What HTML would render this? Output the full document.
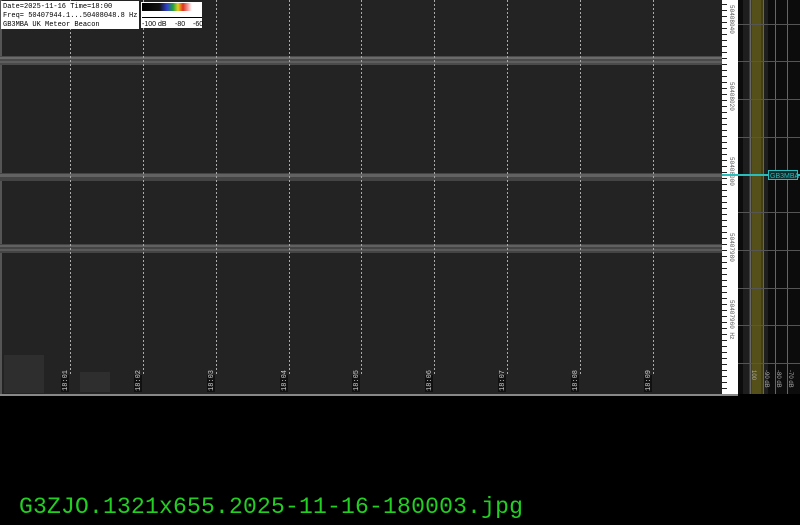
<!DOCTYPE html>
<html><head><meta charset="utf-8"><style>
html,body{margin:0;padding:0;background:#000;width:800px;height:525px;overflow:hidden}
.fn{position:absolute;left:19px;top:494px;font-family:"Liberation Mono",monospace;font-size:23px;color:#22d022;letter-spacing:0.2px;white-space:pre}
</style></head><body>
<svg width="800" height="525" style="position:absolute;left:0;top:0" xmlns="http://www.w3.org/2000/svg">
<rect x="0" y="0" width="800" height="525" fill="#000"/>
<rect x="0" y="0" width="722" height="394" fill="#232323"/>
<rect x="0" y="0" width="2" height="394" fill="#555"/>
<rect x="0" y="394" width="738" height="2" fill="#888"/>
<g>
<rect x="0" y="56" width="722" height="9" fill="#4a4a4a"/>
<rect x="0" y="57" width="722" height="2" fill="#6a6a6a"/>
<rect x="0" y="61" width="722" height="2" fill="#5e5e5e"/>
<rect x="0" y="173" width="722" height="8" fill="#444"/>
<rect x="0" y="174" width="722" height="3" fill="#626262"/>
<rect x="0" y="244" width="722" height="9" fill="#444"/>
<rect x="0" y="245" width="722" height="2" fill="#606060"/>
<rect x="0" y="249" width="722" height="2" fill="#5a5a5a"/>
</g>
<g fill="#2e2e2e">
<rect x="4" y="355" width="40" height="38"/><rect x="80" y="372" width="30" height="20"/>
</g>
<g stroke="#aaa" stroke-width="1" stroke-dasharray="2,2">
<line x1="70.5" y1="0" x2="70.5" y2="375"/>
<line x1="143.5" y1="0" x2="143.5" y2="375"/>
<line x1="216.5" y1="0" x2="216.5" y2="375"/>
<line x1="289.5" y1="0" x2="289.5" y2="375"/>
<line x1="361.5" y1="0" x2="361.5" y2="375"/>
<line x1="434.5" y1="0" x2="434.5" y2="375"/>
<line x1="507.5" y1="0" x2="507.5" y2="375"/>
<line x1="580.5" y1="0" x2="580.5" y2="375"/>
<line x1="653.5" y1="0" x2="653.5" y2="375"/>
</g>
<g font-family="Liberation Mono,monospace" font-size="7" fill="#ccc">
<g transform="translate(67,392) rotate(-90)"><rect x="0" y="-6" width="17" height="8" fill="#111"/><text x="1" y="0">18:01</text></g>
<g transform="translate(140,392) rotate(-90)"><rect x="0" y="-6" width="17" height="8" fill="#111"/><text x="1" y="0">18:02</text></g>
<g transform="translate(213,392) rotate(-90)"><rect x="0" y="-6" width="17" height="8" fill="#111"/><text x="1" y="0">18:03</text></g>
<g transform="translate(286,392) rotate(-90)"><rect x="0" y="-6" width="17" height="8" fill="#111"/><text x="1" y="0">18:04</text></g>
<g transform="translate(358,392) rotate(-90)"><rect x="0" y="-6" width="17" height="8" fill="#111"/><text x="1" y="0">18:05</text></g>
<g transform="translate(431,392) rotate(-90)"><rect x="0" y="-6" width="17" height="8" fill="#111"/><text x="1" y="0">18:06</text></g>
<g transform="translate(504,392) rotate(-90)"><rect x="0" y="-6" width="17" height="8" fill="#111"/><text x="1" y="0">18:07</text></g>
<g transform="translate(577,392) rotate(-90)"><rect x="0" y="-6" width="17" height="8" fill="#111"/><text x="1" y="0">18:08</text></g>
<g transform="translate(650,392) rotate(-90)"><rect x="0" y="-6" width="17" height="8" fill="#111"/><text x="1" y="0">18:09</text></g>
</g>
<rect x="1" y="1" width="138" height="28" fill="#fff"/>
<g font-family="Liberation Mono,monospace" font-size="7" fill="#000">
<text x="3" y="8">Date=2025-11-16 Time=18:00</text>
<text x="3" y="17">Freq= 50407944.1...50408048.8 Hz</text>
<text x="3" y="26">GB3MBA UK Meteor Beacon</text>
</g>
<rect x="141" y="2" width="61" height="26" fill="#fff"/>
<defs><linearGradient id="g" x1="0" x2="1"><stop offset="0" stop-color="#000"/><stop offset="0.35" stop-color="#111"/><stop offset="0.5" stop-color="#3040d0"/><stop offset="0.62" stop-color="#20a040"/><stop offset="0.72" stop-color="#e0d020"/><stop offset="0.82" stop-color="#e03020"/><stop offset="0.92" stop-color="#f0a0a0"/><stop offset="1" stop-color="#fff"/></linearGradient></defs>
<rect x="142" y="3" width="50" height="8" fill="url(#g)"/>
<g stroke="#000" stroke-width="1"><line x1="142" y1="17.5" x2="202" y2="17.5"/></g>
<g font-family="Liberation Sans,sans-serif" font-size="7" fill="#000">
<text x="142" y="26">-100 dB</text><text x="175" y="26">-80</text><text x="193" y="26">-60</text>
</g>
<rect x="722" y="0" width="16" height="394" fill="#fff"/>
<g stroke="#222" stroke-width="1">
<path d="M722 4.5h5M722 10.5h5M722 16.5h5M722 22.5h5M722 28.5h5M722 34.5h5M722 40.5h5M722 46.5h5M722 52.5h5M722 58.5h5M722 64.5h5M722 70.5h5M722 76.5h5M722 82.5h5M722 88.5h5M722 94.5h5M722 100.5h5M722 106.5h5M722 112.5h5M722 118.5h5M722 124.5h5M722 130.5h5M722 136.5h5M722 142.5h5M722 148.5h5M722 154.5h5M722 160.5h5M722 166.5h5M722 172.5h5M722 178.5h5M722 184.5h5M722 190.5h5M722 196.5h5M722 202.5h5M722 208.5h5M722 214.5h5M722 220.5h5M722 226.5h5M722 232.5h5M722 238.5h5M722 244.5h5M722 250.5h5M722 256.5h5M722 262.5h5M722 268.5h5M722 274.5h5M722 280.5h5M722 286.5h5M722 292.5h5M722 298.5h5M722 304.5h5M722 310.5h5M722 316.5h5M722 322.5h5M722 328.5h5M722 334.5h5M722 340.5h5M722 346.5h5M722 352.5h5M722 358.5h5M722 364.5h5M722 370.5h5M722 376.5h5M722 382.5h5M722 388.5h5"/>
</g>
<g font-family="Liberation Mono,monospace" font-size="6" fill="#555">
<text transform="translate(730,5) rotate(90)">50408040</text>
<text transform="translate(730,82) rotate(90)">50408020</text>
<text transform="translate(730,157) rotate(90)">50408000</text>
<text transform="translate(730,233) rotate(90)">50407980</text>
<text transform="translate(730,300) rotate(90)">50407960 Hz</text>
</g>
<rect x="738" y="0" width="62" height="394" fill="#0c0c0c"/>
<rect x="743" y="0" width="25" height="394" fill="#1e1e1e"/>
<rect x="749" y="0" width="15" height="394" fill="#444016"/>
<rect x="752" y="0" width="9" height="394" fill="#55501a"/>
<g stroke="#666" stroke-width="1">
<line x1="750.5" y1="0" x2="750.5" y2="394"/><line x1="763.5" y1="0" x2="763.5" y2="394"/>
<line x1="775.5" y1="0" x2="775.5" y2="394"/><line x1="787.5" y1="0" x2="787.5" y2="394"/>
</g>
<g stroke="#555" stroke-width="1">
<line x1="738" y1="24.5" x2="800" y2="24.5"/><line x1="738" y1="61.5" x2="800" y2="61.5"/><line x1="738" y1="99.5" x2="800" y2="99.5"/><line x1="738" y1="137.5" x2="800" y2="137.5"/><line x1="738" y1="212.5" x2="800" y2="212.5"/><line x1="738" y1="250.5" x2="800" y2="250.5"/><line x1="738" y1="288.5" x2="800" y2="288.5"/><line x1="738" y1="325.5" x2="800" y2="325.5"/><line x1="738" y1="363.5" x2="800" y2="363.5"/>
</g>
<rect x="722" y="174" width="78" height="2" fill="#2bbcbc"/>
<rect x="768.5" y="170.5" width="29" height="9" fill="#0c2a2a" stroke="#2bbcbc"/>
<text x="770" y="178" font-family="Liberation Sans,sans-serif" font-size="7" fill="#2bbcbc">GB3MBA</text>
<g font-family="Liberation Sans,sans-serif" font-size="6" fill="#aaa">
<text transform="translate(752,370) rotate(90)">100</text>
<text transform="translate(765,370) rotate(90)">-90 dB</text>
<text transform="translate(777,370) rotate(90)">-80 dB</text>
<text transform="translate(789,370) rotate(90)">-70 dB</text>
</g>
</svg>
<div class="fn">G3ZJO.1321x655.2025-11-16-180003.jpg</div>
</body></html>
